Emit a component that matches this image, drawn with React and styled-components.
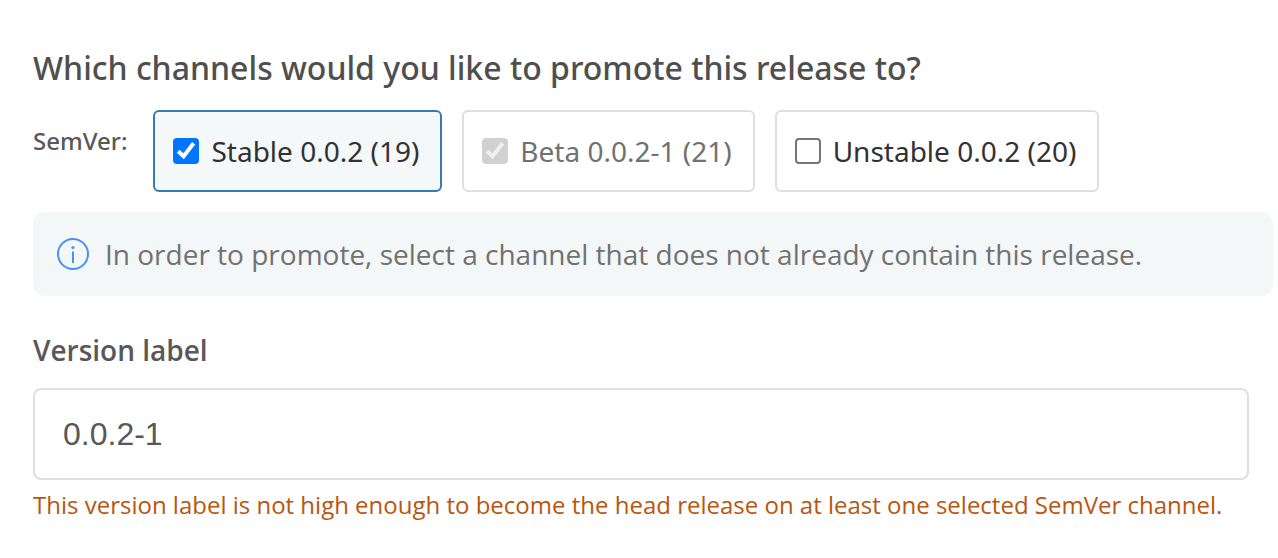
import React, { useState } from 'react';
import styled, { createGlobalStyle } from 'styled-components';

const initialChannels = [
    { id: 'stable', label: 'Stable 0.0.2 (19)', checked: true, disabled: false },
    { id: 'beta', label: 'Beta 0.0.2-1 (21)', checked: true, disabled: true },
    { id: 'unstable', label: 'Unstable 0.0.2 (20)', checked: false, disabled: false },
];

const App = () => {
    const [channels, setChannels] = useState(initialChannels);
    const [versionLabel, setVersionLabel] = useState('0.0.2-1');

    const toggleChannel = (id) => {
        setChannels(channels.map((c) => (c.id === id ? { ...c, checked: !c.checked } : c)));
    };

    return (
        <>
            <GlobalStyle />
            <Main>
                <Heading id="channels-heading">Which channels would you like to promote this release to?</Heading>

                <ChannelRow role="group" aria-labelledby="channels-heading">
                    <GroupName>SemVer:</GroupName>
                    {channels.map((c) => (
                        <Channel key={c.id} htmlFor={c.id} $active={c.checked && !c.disabled} $disabled={c.disabled}>
                            <CheckWrap>
                                <Checkbox
                                    id={c.id}
                                    type="checkbox"
                                    checked={c.checked}
                                    disabled={c.disabled}
                                    onChange={() => toggleChannel(c.id)}
                                />
                                {c.checked && (
                                    <Tick viewBox="0 0 26 26" $disabled={c.disabled} aria-hidden="true">
                                        <path d="M5.2 13.2 L10.6 18.2 L20.6 5.2" />
                                    </Tick>
                                )}
                            </CheckWrap>
                            {c.label}
                        </Channel>
                    ))}
                </ChannelRow>

                <Notice>
                    <InfoIcon viewBox="0 0 32 32" aria-hidden="true">
                        <circle cx="16" cy="16" r="15" />
                        <path d="M16 13.5 V25" />
                        <circle className="dot" cx="16" cy="9.5" r="1.6" />
                    </InfoIcon>
                    <p>In order to promote, select a channel that does not already contain this release.</p>
                </Notice>

                <Field>
                    <label htmlFor="version-label">Version label</label>
                    <input
                        id="version-label"
                        type="text"
                        value={versionLabel}
                        aria-describedby="version-warning"
                        onChange={(e) => setVersionLabel(e.target.value)}
                    />
                    <Warning id="version-warning">
                        This version label is not high enough to become the head release on at least one selected SemVer channel.
                    </Warning>
                </Field>
            </Main>
        </>
    );
};

export default App;

const GlobalStyle = createGlobalStyle`
    * {
        box-sizing: border-box;
    }

    body {
        margin: 0;
        background-color: #ffffff;
        font-family: "Open Sans", "Noto Sans", sans-serif;
    }
`;

const Main = styled.main`
    padding: 46px 5px 32px 33px;
`;

const Heading = styled.h1`
    margin: 0 0 20px;
    font-family: "Noto Sans", "Open Sans", sans-serif;
    font-size: 32px;
    line-height: 44px;
    font-weight: 500;
    color: #4f4f4f;
`;

const ChannelRow = styled.div`
    display: flex;
    align-items: center;
    flex-wrap: wrap;
    gap: 20px;
`;

const GroupName = styled.span`
    padding-bottom: 20px;
    margin-right: 6px;
    font-family: "Noto Sans", "Open Sans", sans-serif;
    font-size: 24px;
    line-height: 32px;
    font-weight: 500;
    color: #585858;
`;

const Channel = styled.label`
    display: flex;
    align-items: center;
    gap: 12px;
    padding: 20px 21px 20px 18px;
    border: 2px solid ${(p) => (p.$active ? '#337ab7' : '#dfdfdf')};
    border-radius: 6px;
    background-color: ${(p) => (p.$active ? '#f4f8f9' : '#ffffff')};
    font-family: "Noto Sans", "Open Sans", sans-serif;
    font-size: 28px;
    line-height: 38px;
    font-weight: 400;
    color: ${(p) => (p.$disabled ? '#717171' : '#323232')};
    cursor: ${(p) => (p.$disabled ? 'default' : 'pointer')};
`;

const CheckWrap = styled.span`
    display: grid;

    > * {
        grid-area: 1 / 1;
    }
`;

const Checkbox = styled.input`
    appearance: none;
    width: 26px;
    height: 26px;
    margin: 0;
    border: 2px solid #767676;
    border-radius: 4px;
    background-color: #ffffff;

    &:checked {
        border-color: #0075ff;
        background-color: #0075ff;
    }

    &:disabled {
        border-color: #d1d1d1;
        background-color: #d1d1d1;
    }
`;

const Tick = styled.svg`
    width: 26px;
    height: 26px;
    fill: none;
    stroke: ${(p) => (p.$disabled ? '#f0f0f0' : '#ffffff')};
    stroke-width: 4;
    pointer-events: none;
`;

const Notice = styled.div`
    display: flex;
    align-items: center;
    gap: 16px;
    margin-top: 20px;
    padding: 22px 24px;
    border-radius: 12px;
    background-color: #f4f7f8;

    p {
        margin: 0;
        font-size: 28px;
        line-height: 40px;
        color: #717171;
    }
`;

const InfoIcon = styled.svg`
    flex: none;
    width: 32px;
    height: 32px;
    fill: none;
    stroke: #4591f7;
    stroke-width: 2;

    .dot {
        fill: #4591f7;
        stroke: none;
    }
`;

const Field = styled.div`
    display: flex;
    flex-direction: column;
    margin-top: 34px;
    padding-right: 24px;

    label {
        font-size: 28px;
        line-height: 40px;
        font-weight: 600;
        color: #585858;
    }

    input {
        width: 100%;
        margin-top: 18px;
        padding: 26px 28px;
        border: 2px solid #dfdfdf;
        border-radius: 8px;
        background-color: #ffffff;
        font-family: "Liberation Sans", Arial, sans-serif;
        font-size: 32px;
        line-height: 36px;
        color: #585858;
    }
`;

const Warning = styled.p`
    margin: 8px 0 0;
    font-size: 24px;
    line-height: 34px;
    color: #b9560e;
`;
